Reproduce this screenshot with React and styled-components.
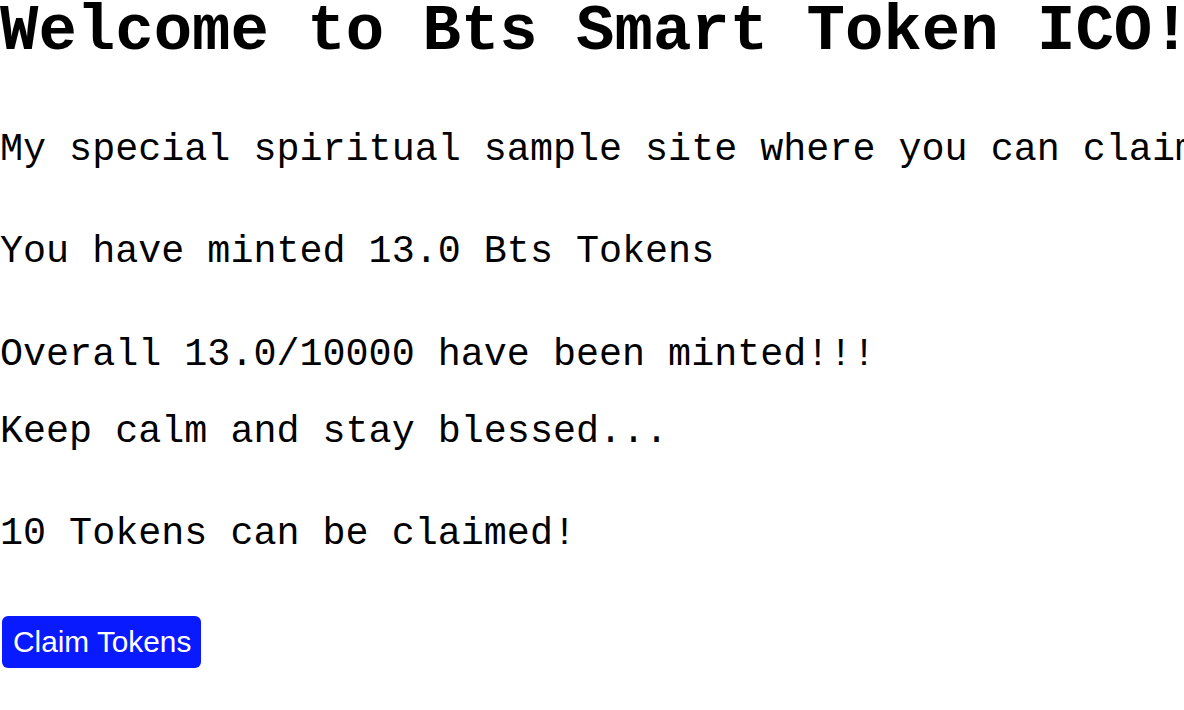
import React from "react";
import styled, { createGlobalStyle } from "styled-components";

const GlobalStyle = createGlobalStyle`
  html, body {
    margin: 0;
    padding: 0;
    background: #ffffff;
    overflow: hidden;
  }
  body {
    font-family: "Liberation Mono", "Courier New", monospace;
    color: #000000;
  }
`;

const Page = styled.main`
  display: flex;
  flex-direction: column;
  align-items: flex-start;
  white-space: nowrap;
`;

const Heading = styled.h1`
  margin: 0;
  font-size: 64px;
  line-height: 64px;
  font-weight: 700;
`;

const Line = styled.p`
  margin: ${(props) => props.$top || 58}px 0 0 0;
  font-size: 38.4px;
  line-height: 44px;
`;

const ClaimButton = styled.button`
  margin-top: 60px;
  margin-left: 2px;
  padding: 9px 10px 9px 11px;
  border: none;
  border-radius: 6px;
  background-color: #0a1aff;
  color: #ffffff;
  font-family: "Liberation Sans", Arial, sans-serif;
  font-size: 29.8px;
  line-height: 34px;
  cursor: pointer;
`;

function App() {
  return (
    <Page>
      <GlobalStyle />
      <Heading>Welcome to Bts Smart Token ICO!</Heading>
      <Line $top={64}>
        My special spiritual sample site where you can claim Bts Tokens
      </Line>
      <Line>You have minted 13.0 Bts Tokens</Line>
      <Line $top={59}>Overall 13.0/10000 have been minted!!!</Line>
      <Line $top={33}>Keep calm and stay blessed...</Line>
      <Line>10 Tokens can be claimed!</Line>
      <ClaimButton>Claim Tokens</ClaimButton>
    </Page>
  );
}

export default App;
